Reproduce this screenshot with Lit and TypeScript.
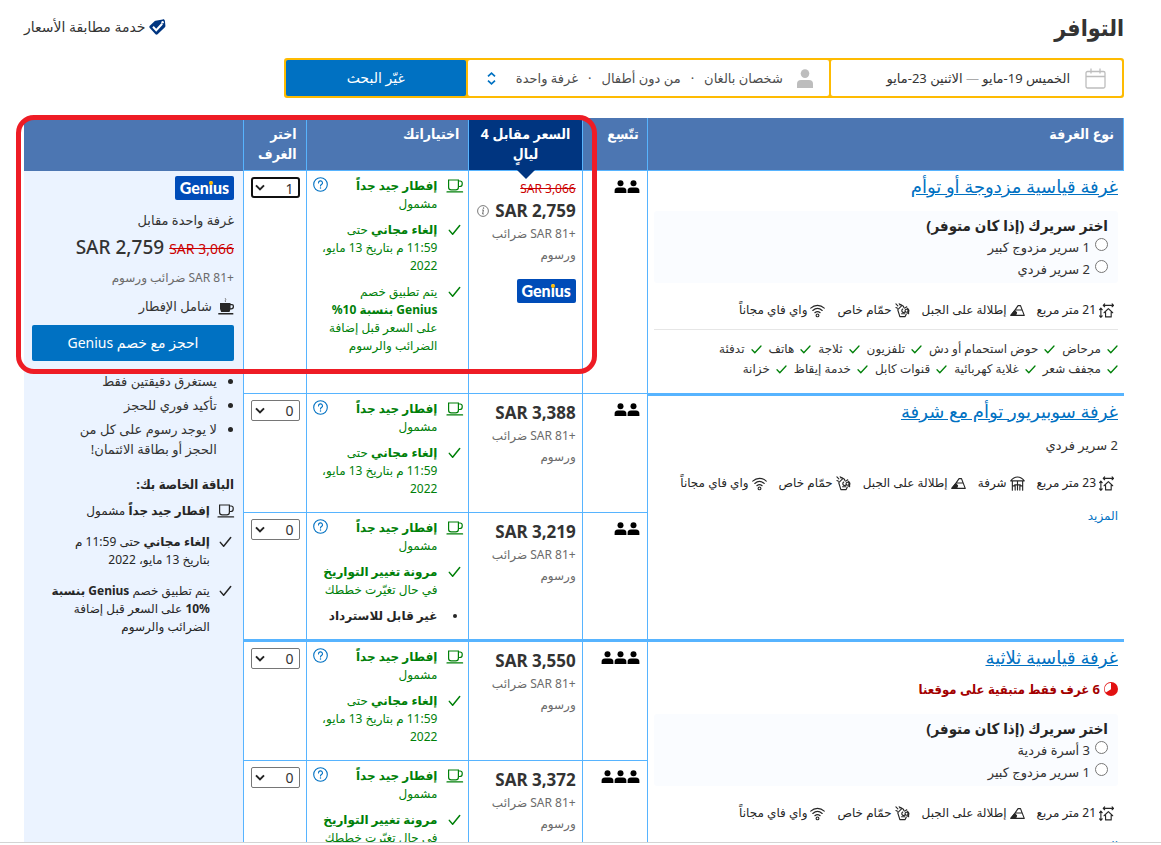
import { LitElement, html, css, svg, nothing, TemplateResult } from "lit";
import { customElement } from "lit/decorators.js";
import { classMap } from "lit/directives/class-map.js";

/* ---------- icons ---------- */

const cup = html`<svg class="ic-cup" viewBox="0 0 18 14" fill="none" stroke="currentColor">
  <path d="M2.6 1h9.8v7.2a2.6 2.6 0 0 1-2.6 2.6H5.2a2.6 2.6 0 0 1-2.6-2.6zM12.4 2h1.8a2 2 0 0 1 2 2v.9a2.6 2.6 0 0 1-2.6 2.6h-1.2M1 12.9h15.6" stroke-width="1.2" stroke-linecap="round"/>
</svg>`;

const check = html`<svg class="ic-check" viewBox="0 0 14 12" fill="none" stroke="currentColor">
  <path d="M1.4 6.4l3.6 4.2L12.6 1.2" stroke-width="1.6" stroke-linecap="round" stroke-linejoin="round"/>
</svg>`;

const smallCheck = html`<svg class="ic-small-check" viewBox="0 0 11 9" fill="none" stroke="#008009">
  <path d="M1 4.8l2.8 3L10 1" stroke-width="1.3" stroke-linecap="round" stroke-linejoin="round"/>
</svg>`;

const person = html`<svg class="ic-person" viewBox="0 0 13 13" fill="#000">
  <circle cx="6.5" cy="3.2" r="3"/><path d="M.6 13v-1.8a3.4 3.4 0 0 1 3.4-3.6h5a3.4 3.4 0 0 1 3.4 3.6V13z"/>
</svg>`;

const icon = (body: TemplateResult | unknown) =>
  html`<svg class="ic-fac" viewBox="0 0 16 16" fill="none" stroke="#262626" stroke-width="1.2" stroke-linecap="round" stroke-linejoin="round">${body}</svg>`;

const facIcons: Record<string, unknown> = {
  size: icon(svg`<path d="M4.5 2.5h11M6 1L4.5 2.5 6 4M14 1l1.5 1.5L14 4M2 5.5v9.8M.6 7L2 5.5 3.4 7M.6 13.8L2 15.3l1.400-1.500M5.400 10.400L10 6l4.600 4.400M7 10v4.800h6V10"/>`),
  balcony: icon(svg`<path d="M.8 5.200C3 2.200 5.400 1 8 1s5 1.200 7.200 4.200zM8 5.200v9.600M5 9.500h6M2.500 5.200v10M13.500 5.200v10M2.500 10.500h3v4.500M13.500 10.500h-3v4.500M5.500 15V12M10.500 15V12"/>`),
  mountain: icon(svg`<path d="M1 13.200L5 8l1-1.500L8.600 2.800h2.600l4 10.400zM6 7.500h7"/><path d="M1 13L5 8.200l2 2L6 13z" fill="#262626"/>`),
  bath: icon(svg`<path d="M1 1l2 2M4.500.8l1 1.400M1 4.800l1.600.8M7.500 2.600L3 7M6 1.500l3 2 .5 1.500M3 7.500l2.200 7h5.600l1.200-2.500M8.200 6.500a2 2 0 1 0 2.800 2.700M10.500 5.500l2-1.500M13 5.500c2.500 1 2.500 4.500 0 5.500M7 11.500h3.500M14.500 7.500v4"/><circle cx="12.300" cy="8.200" r="1.600"/>`),
  wifi: icon(svg`<path d="M.8 5.400c4.200-3.900 10.200-3.900 14.400 0M3 8c3-2.800 7-2.800 10 0M5.200 10.400c1.700-1.500 3.900-1.500 5.600 0"/><circle cx="8" cy="13.200" r="1.500"/>`),
};

const genius = html`<span class="genius">Gen<span class="dotted">i</span>us</span>`;

/* ---------- data ---------- */

interface Choice {
  icon: "cup" | "check" | "dot";
  text: TemplateResult;
}
interface Offer {
  guests: number;
  price: string;
  was?: string;
  selected: number;
  choices: Choice[];
}
interface Room {
  name: string;
  scarcity?: string;
  bed?: string;
  beds?: string[];
  facilities: [string, string][];
  amenities?: string[];
  more?: boolean;
  offers: Offer[];
}

/* br.n breaks only in the narrow offer column, br.w only in the summary column */
const breakfast: Choice = { icon: "cup", text: html`<b>إفطار جيد جداً</b> <br class="n" />مشمول` };
const freeCancel: Choice = {
  icon: "check",
  text: html`<b>إلغاء مجاني</b> حتى <br class="n" />11:59 م <br class="w" />بتاريخ 13 مايو، <br class="n" />2022`,
};
const discount: Choice = {
  icon: "check",
  text: html`يتم تطبيق خصم <br class="n" /><b>Genius بنسبة <br class="w" />10%</b> <br class="n" />على السعر قبل إضافة <br />الضرائب والرسوم`,
};
const flexible: Choice = { icon: "check", text: html`<b>مرونة تغيير التواريخ</b> <br />في حال تغيّرت خططك` };
const noRefund: Choice = { icon: "dot", text: html`<b>غير قابل للاسترداد</b>` };

const size = (n: number): [string, string] => ["size", `${n} متر مربع`];
const view: [string, string] = ["mountain", "إطلالة على الجبل"];
const bath: [string, string] = ["bath", "حمّام خاص"];
const wifi: [string, string] = ["wifi", "واي فاي مجاناً"];

const rooms: Room[] = [
  {
    name: "غرفة قياسية مزدوجة أو توأم",
    beds: ["1 سرير مزدوج كبير", "2 سرير فردي"],
    facilities: [size(21), view, bath, wifi],
    amenities: ["مرحاض", "حوض استحمام أو دش", "تلفزيون", "ثلاجة", "هاتف", "تدفئة", "مجفف شعر", "غلاية كهربائية", "قنوات كابل", "خدمة إيقاظ", "خزانة"],
    offers: [{ guests: 2, price: "2,759", was: "3,066", selected: 1, choices: [breakfast, freeCancel, discount] }],
  },
  {
    name: "غرفة سوبيريور توأم مع شرفة",
    bed: "2 سرير فردي",
    facilities: [size(23), ["balcony", "شرفة"], view, bath, wifi],
    more: true,
    offers: [
      { guests: 2, price: "3,388", selected: 0, choices: [breakfast, freeCancel] },
      { guests: 2, price: "3,219", selected: 0, choices: [breakfast, flexible, noRefund] },
    ],
  },
  {
    name: "غرفة قياسية ثلاثية",
    scarcity: "6 غرف فقط متبقية على موقعنا",
    beds: ["3 أسرة فردية", "1 سرير مزدوج كبير"],
    facilities: [size(21), view, bath, wifi],
    more: true,
    offers: [
      { guests: 3, price: "3,550", selected: 0, choices: [breakfast, freeCancel] },
      { guests: 3, price: "3,372", selected: 0, choices: [breakfast, flexible, noRefund] },
    ],
  },
];

@customElement("app-root")
export class AppRoot extends LitElement {
  static styles = css`
    :host {
      --narrow: "Noto Sans", "DejaVu Sans Condensed", "DejaVu Sans", sans-serif;
      display: block;
      direction: rtl;
      height: calc(100vh - 2px);
      box-sizing: border-box;
      overflow: hidden;
      border-bottom: 1px solid #d4d4d4;
      background: #fff;
      color: #333;
      font: 13px/20px "Noto Sans", "DejaVu Sans", sans-serif;
    }
    *, *::before, *::after { box-sizing: border-box; }
    button, select { font: inherit; color: inherit; margin: 0; }
    svg { display: block; flex: none; }
    a { color: #0071c2; text-decoration: none; }
    ul { list-style: none; margin: 0; padding: 0; }

    .page { padding: 10px 37px 0 24px; }
    .top { display: flex; justify-content: space-between; align-items: center; height: 34px; }
    .top h2 { margin: 0; font-family: var(--narrow); font-size: 23px; line-height: 32px; font-weight: 700; }
    .match { display: flex; align-items: center; gap: 4px; font-weight: 500; font-size: 14px; }
    .match svg { width: 17px; height: 16px; }

    .search {
      display: grid; grid-template-columns: 291fr 361fr 180fr; gap: 2px; width: 76.4%; height: 40px; margin: 14px 0 20px;
      padding: 2px; background: #febb02; border-radius: 3px;
    }
    .search button { border: 0; padding: 0; border-radius: 2px; background: #fff; display: flex; align-items: center; white-space: nowrap; min-width: 0; }
    .search .dates { padding: 0 16px; gap: 15px; }
    .search .guests { padding: 0 15px; gap: 13px; color: #4d4d4d; }
    .search .change { background: #0071c2; color: #fff; justify-content: center; font-size: 14px; }
    .dates svg { width: 21px; height: 21px; }
    .dash { color: #aaa; }
    .guests .who { width: 18px; height: 19px; }
    .guests .sort { width: 9px; height: 13px; margin-right: auto; margin-left: 4px; }
    .guests .count { display: flex; gap: 10px; }

    .board { position: relative; }
    .marker {
      position: absolute; left: -8px; top: -3px; width: 581px; height: 259px;
      border: 5px solid #ee1c25; border-radius: 18px; pointer-events: none;
    }

    table { width: 100%; table-layout: fixed; border-collapse: separate; border-spacing: 0; }
    .c-room { width: 43.400%; }
    .c-sleeps { width: 5.900%; }
    .c-price { width: 10.300%; }
    .c-choice { width: 14.800%; }
    .c-select { width: 5.700%; }
    th {
      height: 53px; padding: 6px 9px; vertical-align: top; text-align: right;
      font-family: var(--narrow); font-size: 14px; line-height: 20px; font-weight: 700; color: #fff;
      background: #4c76b2; border-bottom: 1px solid #57b4ff; border-left: 1px solid #57b4ff;
    }
    th.first { border-right: 1px solid #57b4ff; }
    th.last { border-left: 0; border-bottom-color: #4c76b2; }
    th.sleeps { padding: 6px 8px; }
    th.price { position: relative; padding: 6px; text-align: center; background: #003580; }
    th.price::after {
      content: ""; position: absolute; top: 100%; left: calc(50% - 9px);
      border: 9px solid transparent; border-top-color: #003580; border-bottom: 0;
    }
    td { padding: 6px; vertical-align: top; border-left: 1px solid #57b4ff; }
    tr.ruled td { border-top: 1px solid #57b4ff; }
    tr.ruled td.room, tr.strong td { border-top: 3px solid #57b4ff; }
    td.room { padding: 3px 6px 14px; }
    td.summary, tr td.summary { padding: 5px 9px 0 8px; border: 0; background: #ebf3ff; }

    .name { display: block; width: fit-content; font-size: 18px; line-height: 24px; font-weight: 500; text-decoration: underline; }
    .scarce { display: flex; align-items: center; gap: 4px; margin-top: 10px; font-family: var(--narrow); font-weight: 700; color: #a30000; }
    .scarce svg { width: 14px; height: 14px; }
    fieldset { margin: 13px 0 0; border: 0; padding: 3px 10px; background: #fafcff; border-radius: 3px; line-height: 22px; min-width: 0; }
    .scarce + fieldset { margin-top: 15px; }
    legend { float: right; width: 100%; padding: 0; font-family: var(--narrow); font-size: 15px; font-weight: 700; color: #262626; }
    .bed { display: flex; gap: 5px; clear: both; }
    .bed input { width: 13px; height: 13px; margin: 2px 0 0; }
    .plain { margin: 11px 0 0; line-height: 22px; }
    .fac { display: flex; flex-wrap: wrap; gap: 0 12px; margin-top: 17px; padding-right: 4px; font-size: 12px; color: #262626; }
    .fac li { display: flex; align-items: center; gap: 3px; white-space: nowrap; }
    .ic-fac { width: 15px; height: 15px; }
    .amen { display: flex; flex-wrap: wrap; gap: 0 7px; margin-top: 9px; padding: 9px 0 0 40px; border-top: 1px solid #e6e6e6; font-size: 12px; }
    .amen li { display: flex; align-items: center; gap: 6px; white-space: nowrap; }
    .ic-small-check { width: 11px; height: 9px; }
    .more { display: block; width: fit-content; margin-top: 13px; font-size: 12px; }

    .people { display: flex; padding-top: 3px; margin-right: 1px; }
    .ic-person { width: 13px; height: 13px; }

    .was { color: #c00; text-decoration: line-through; font-size: 12px; line-height: 21px; white-space: nowrap; }
    .now { display: flex; align-items: center; gap: 6px; font-size: 17px; line-height: 24px; font-weight: 700; white-space: nowrap; }
    .now svg { width: 12px; height: 12px; }
    .tax { color: #6b6b6b; font-size: 12px; line-height: 21px; }
    td.offer { padding-top: 7px; }
    td.offer .genius { margin-top: 14px; }
    .genius {
      display: flex; align-items: center; justify-content: center; width: 59px; height: 24px; direction: ltr;
      border-radius: 2px; background: #004cb8; color: #fff; font: 900 16px/24px "Lato", sans-serif;
    }
    .dotted { position: relative; line-height: 20px; }
    .dotted::after { content: ""; position: absolute; top: 3px; left: 0; width: 4px; height: 4px; border-radius: 50%; background: #febb02; }

    .choices { display: grid; gap: 8px; font-size: 12px; line-height: 18px; color: #008009; }
    .choices li { display: grid; grid-template-columns: 17px 1fr; gap: 9px; }
    .choices .dot { color: #262626; }
    .choices .text { white-space: nowrap; }
    .mark { display: flex; justify-content: center; height: 18px; align-items: center; }
    .bullet { width: 4px; height: 4px; border-radius: 50%; background: #262626; }
    .ic-cup { width: 18px; height: 14px; }
    .ic-check { width: 13px; height: 12px; }
    td.choice { position: relative; padding: 6px 5px 14px 6px; }
    .help { position: absolute; left: 6px; top: 6px; width: 15px; height: 15px; padding: 0; border: 0; background: none; }
    .choice .w, .summary .n { display: none; }

    .pick { position: relative; display: block; }
    .pick select {
      display: block; width: 49px; height: 21px; padding: 0 5px; direction: rtl; font-size: 14px;
      appearance: none; border: 1px solid #767676; border-radius: 2px; background: #fff; color: #333;
    }
    .pick.active select { border: 2px solid #101010; border-radius: 3px; padding: 0 4px; }
    .pick svg { position: absolute; right: 35px; top: 7px; width: 10px; height: 7px; pointer-events: none; }

    .for { margin-top: 10px; }
    .total { display: flex; align-items: baseline; gap: 5px; margin-top: 3px; white-space: nowrap; }
    .total .was { font-size: 14px; }
    .total strong { font-size: 19px; line-height: 28px; font-weight: 500; }
    .summary .tax { margin-top: 6px; }
    .incl { display: flex; align-items: center; gap: 6px; margin-top: 8px; }
    .incl svg { width: 16px; height: 17px; }
    .book { display: block; width: 100%; height: 36px; margin: 9px 0 10px; padding: 0; border: 0; border-radius: 2px; background: #0071c2; color: #fff; font-size: 14px; }
    .perks { display: grid; gap: 4px; padding-left: 16px; }
    .perks li { position: relative; padding-right: 17px; }
    .perks li::before { content: ""; position: absolute; right: 1px; top: 8px; width: 5px; height: 5px; border-radius: 50%; background: #262626; }
    .pack { margin: 15px 0 8px; font-family: var(--narrow); font-weight: 700; color: #262626; }
    .summary .choices { gap: 13px; color: #262626; }
    .summary .choices li { grid-template-columns: 16px 1fr; gap: 8px; }
  `;

  private people(n: number) {
    return html`<div class="people" role="img" aria-label="${n}">${Array.from({ length: n }, () => person)}</div>`;
  }

  private choices(list: Choice[]) {
    return html`<ul class="choices">
      ${list.map(
        (c) => html`<li class=${c.icon}>
          <span class="mark">${c.icon === "cup" ? cup : c.icon === "check" ? check : html`<span class="bullet"></span>`}</span>
          <span class="text">${c.text}</span>
        </li>`,
      )}
    </ul>`;
  }

  private room(r: Room, index: number) {
    return html`<td class="room" rowspan=${r.offers.length}>
      <a class="name" href="#room${index}">${r.name}</a>
      ${r.scarcity
        ? html`<div class="scarce">
            <svg viewBox="0 0 14 14"><circle cx="7" cy="7" r="7" fill="#e21111"/><path d="M7 1v6.200L1.800 10.400A6 6 0 0 1 7 1z" fill="#fff"/></svg>
            ${r.scarcity}
          </div>`
        : nothing}
      ${r.bed ? html`<p class="plain">${r.bed}</p>` : nothing}
      ${r.beds
        ? html`<fieldset>
            <legend>اختر سريرك (إذا كان متوفر)</legend>
            ${r.beds.map((b) => html`<label class="bed"><input type="radio" name="bed${index}" />${b}</label>`)}
          </fieldset>`
        : nothing}
      <ul class="fac">${r.facilities.map(([k, t]) => html`<li>${facIcons[k]}<span>${t}</span></li>`)}</ul>
      ${r.amenities
        ? html`<ul class="amen">${r.amenities.map((t) => html`<li>${smallCheck}<span>${t}</span></li>`)}</ul>`
        : nothing}
      ${r.more ? html`<a class="more" href="#more${index}">المزيد</a>` : nothing}
    </td>`;
  }

  private offer(o: Offer) {
    return html`
      <td>${this.people(o.guests)}</td>
      <td class="offer">
        ${o.was ? html`<div class="was">SAR ${o.was}</div>` : nothing}
        <div class="now"><span dir="ltr">SAR ${o.price}</span>${o.was
          ? html`<svg viewBox="0 0 12 12" fill="none" stroke="#6b6b6b"><circle cx="6" cy="6" r="5.400" stroke-width=".9"/><path d="M5.200 5h1.200L5.600 9h1.200" stroke-width="1"/><circle cx="6.500" cy="3.100" r=".5" fill="#6b6b6b" stroke-width=".5"/></svg>`
          : nothing}</div>
        <div class="tax">+81 SAR ضرائب ورسوم</div>
        ${o.was ? genius : nothing}
      </td>
      <td class="choice">
        ${this.choices(o.choices)}
        <button class="help" aria-label="؟">
          <svg viewBox="0 0 15 15" fill="none" stroke="#0071c2"><circle cx="7.500" cy="7.500" r="6.800" stroke-width="1.100"/><path d="M5.500 5.900a2 2 0 1 1 3 1.700c-.7.400-1 .7-1 1.400" stroke-width="1.100" stroke-linecap="round"/><circle cx="7.500" cy="11" r=".75" fill="#0071c2" stroke="none"/></svg>
        </button>
      </td>
      <td>
        <label class=${classMap({ pick: true, active: o.selected > 0 })}>
          <select aria-label="اختر الغرف">
            ${[0, 1, 2, 3].map((n) => html`<option ?selected=${n === o.selected}>${n}</option>`)}
          </select>
          <svg viewBox="0 0 10 7" fill="none" stroke="#222"><path d="M1 1.400l4 4 4-4" stroke-width="2"/></svg>
        </label>
      </td>`;
  }

  private summary(rows: number) {
    return html`<td class="summary" rowspan=${rows}>
      ${genius}
      <div class="for">غرفة واحدة مقابل</div>
      <div class="total"><span class="was" dir="ltr">SAR 3,066</span><strong dir="ltr">SAR 2,759</strong></div>
      <div class="tax">+81 SAR ضرائب ورسوم</div>
      <div class="incl">
        <svg viewBox="0 0 16 17" fill="#262626"><path d="M2 5h10.500v1H14a2 2 0 0 1 2 2v.8A2.700 2.700 0 0 1 13.300 11.500h-.9L11.500 14H3.200L2 11zM12.500 7.300v2.900h.6c1 0 1.600-.7 1.600-1.600V8c0-.4-.3-.7-.7-.7zM.3 15h15v1.600H.3z"/><path d="M7.800 4C5.800 2.600 9 2 7.200.2" fill="none" stroke="#777"/></svg>
        شامل الإفطار
      </div>
      <button class="book">احجز مع خصم Genius</button>
      <ul class="perks">
        <li>يستغرق دقيقتين فقط</li>
        <li>تأكيد فوري للحجز</li>
        <li>لا يوجد رسوم على كل من الحجز أو بطاقة الائتمان!</li>
      </ul>
      <div class="pack">الباقة الخاصة بك:</div>
      ${this.choices([breakfast, freeCancel, discount])}
    </td>`;
  }

  render() {
    const total = rooms.reduce((n, r) => n + r.offers.length, 0);
    return html`<main class="page">
      <header class="top">
        <h2>التوافر</h2>
        <div class="match">
          <svg viewBox="0 0 17 16"><path d="M6.500 1.800L13.800.4c1.100-.2 2 .5 2.100 1.500l.5 4.800c.1.600-.1 1-.5 1.500l-7.300 7c-.7.600-1.500.6-2.100 0L.8 9c-.6-.7-.6-1.500 0-2.200l4.500-4.300c.3-.4.700-.6 1.200-.7z" fill="#003580"/><path d="M4 7.800l3.200 3.400 6-6.400" fill="none" stroke="#fff" stroke-width="2"/><circle cx="13.600" cy="3.200" r="1.200" fill="#fff"/></svg>
          خدمة مطابقة الأسعار
        </div>
      </header>

      <form class="search" @submit=${(e: Event) => e.preventDefault()}>
        <button type="button" class="dates">
          <svg viewBox="0 0 21 21" fill="none" stroke="#bdbdbd" stroke-width="1.300"><rect x="1" y="3.500" width="19" height="16.500" rx="1.500"/><path d="M1 8.500h19M6 .5v5M15 .5v5"/></svg>
          <span>الخميس 19-مايو <span class="dash">—</span> الاثنين 23-مايو</span>
        </button>
        <button type="button" class="guests">
          <svg class="who" viewBox="0 0 18 19" fill="#bdbdbd"><circle cx="9" cy="4.600" r="4.300"/><path d="M1 19v-4a4 4 0 0 1 4-4h8a4 4 0 0 1 4 4v4z"/></svg>
          <span class="count"><span>شخصان بالغان</span><span>·</span><span>من دون أطفال</span><span>·</span><span>غرفة واحدة</span></span>
          <svg class="sort" viewBox="0 0 9 13" fill="none" stroke="#0071c2" stroke-width="1.700"><path d="M1 4.400L4.500 1.200 8 4.400M1 8.600l3.500 3.200L8 8.600"/></svg>
        </button>
        <button type="submit" class="change">غيّر البحث</button>
      </form>

      <section class="board">
        <table>
          <colgroup>
            <col class="c-room" /><col class="c-sleeps" /><col class="c-price" /><col class="c-choice" /><col class="c-select" /><col />
          </colgroup>
          <thead>
            <tr>
              <th class="first">نوع الغرفة</th>
              <th class="sleeps">تتّسِع</th>
              <th class="price">السعر مقابل 4 ليالٍ</th>
              <th>اختياراتك</th>
              <th>اختر الغرف</th>
              <th class="last"></th>
            </tr>
          </thead>
          <tbody>
            ${rooms.map((r, i) =>
              r.offers.map(
                (o, j) => html`<tr class=${classMap({ ruled: i + j > 0, strong: i > 1 && j === 0 })}>
                  ${j === 0 ? this.room(r, i) : nothing}${this.offer(o)}${i + j === 0 ? this.summary(total) : nothing}
                </tr>`,
              ),
            )}
          </tbody>
        </table>
        <div class="marker"></div>
      </section>
    </main>`;
  }
}
